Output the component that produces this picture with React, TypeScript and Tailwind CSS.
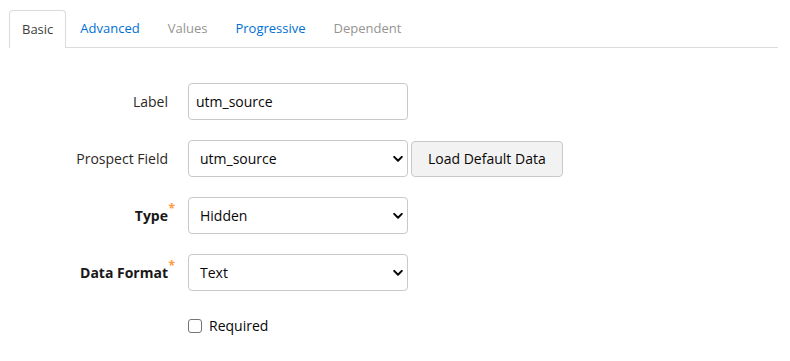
import React from 'react';

const tabs = [
  { name: 'Basic', state: 'active' },
  { name: 'Advanced', state: 'link' },
  { name: 'Values', state: 'muted' },
  { name: 'Progressive', state: 'link' },
  { name: 'Dependent', state: 'muted' },
];

function Chevron() {
  return (
    <svg width="10" height="7" viewBox="0 0 10 7" className="absolute right-[4px] top-1/2 -translate-y-1/2 pointer-events-none">
      <path d="M1.2 1.4 L5 5.2 L8.8 1.4" fill="none" stroke="#080707" strokeWidth="2" strokeLinecap="round" strokeLinejoin="round" />
    </svg>
  );
}

function FieldLabel({ text, bold, required }: { text: string; bold?: boolean; required?: boolean }) {
  return (
    <div className="w-[168px] shrink-0 flex justify-end relative">
      <span className={`text-[14px] ${bold ? 'font-bold text-[#181818]' : 'text-[#2b2826]'}`}>{text}</span>
      {required && (
        <span className="absolute -right-[7px] -top-[5px] text-[12px] font-bold text-[#ff9a3c]">*</span>
      )}
    </div>
  );
}

function SelectBox({ value }: { value: string }) {
  return (
    <div className="relative w-[220px] h-[37px] rounded-[4px] border border-[#c9c9c9] bg-white flex items-center pl-[11px]">
      <span className="text-[14px] text-[#080707]">{value}</span>
      <Chevron />
    </div>
  );
}

export default function App() {
  return (
    <div className="w-[790px] h-[361px] bg-white" style={{ fontFamily: '"Open Sans", "Noto Sans", sans-serif' }}>
      <div className="pt-[10px] pl-[9px] pr-[12px]">
        <div className="flex border-b border-[#dddbda] h-[38px]">
          {tabs.map(t => (
            <div
              key={t.name}
              className={
                t.state === 'active'
                  ? 'h-[38px] px-[12px] flex items-center border border-b-0 border-[#dddbda] rounded-t-[4px] bg-white -mb-px text-[13px] text-[#3e3e3c]'
                  : `h-[37px] px-[14px] flex items-center text-[13px] ${t.state === 'link' ? 'text-[#0070d2]' : 'text-[#969492]'}`
              }
            >
              {t.name}
            </div>
          ))}
        </div>
      </div>

      <div className="pt-[35px] flex flex-col gap-[20px]">
        <div className="flex items-center gap-[20px]">
          <FieldLabel text="Label" />
          <div className="w-[220px] h-[37px] rounded-[4px] border border-[#c9c9c9] bg-white flex items-center pl-[7px]">
            <span className="text-[14px] text-[#080707]">utm_source</span>
          </div>
        </div>

        <div className="flex items-center gap-[20px]">
          <FieldLabel text="Prospect Field" />
          <div className="flex items-center gap-[3px]">
            <SelectBox value="utm_source" />
            <button className="h-[36px] px-[16px] rounded-[4px] border border-[#c9c9c9] bg-[#f3f2f2] text-[14px] text-[#080707]">
              Load Default Data
            </button>
          </div>
        </div>

        <div className="flex items-center gap-[20px]">
          <FieldLabel text="Type" bold required />
          <SelectBox value="Hidden" />
        </div>

        <div className="flex items-center gap-[20px]">
          <FieldLabel text="Data Format" bold required />
          <SelectBox value="Text" />
        </div>

        <div className="flex items-center gap-[7px] pl-[188px] pt-[4px]">
          <span className="w-[14px] h-[14px] rounded-[3px] border border-[#747474] bg-white" />
          <span className="text-[14px] text-[#080707]">Required</span>
        </div>
      </div>
    </div>
  );
}
